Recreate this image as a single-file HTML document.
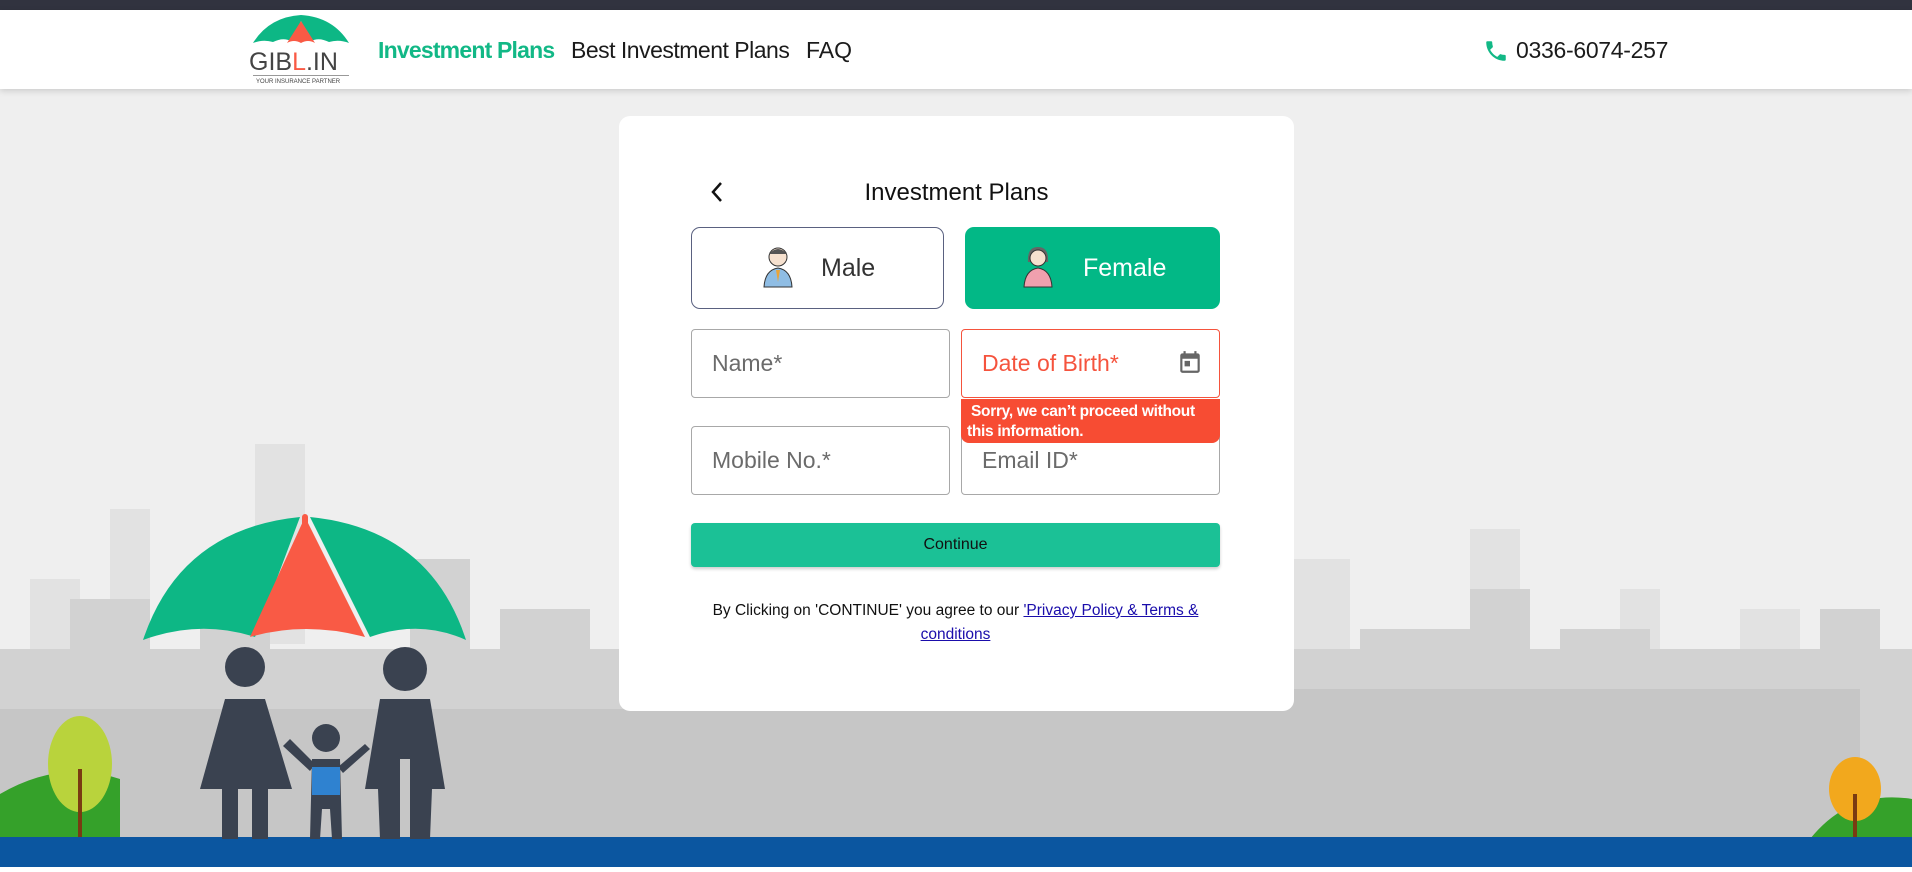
<!DOCTYPE html>
<html><head><meta charset="utf-8"><style>
*{box-sizing:border-box;margin:0;padding:0}
body{width:1912px;height:872px;overflow:hidden;background:#efefef;font-family:"Liberation Sans",Arial,sans-serif;position:relative}
.topbar{position:absolute;left:0;top:0;width:1912px;height:10px;background:#31333f}
.header{position:absolute;left:0;top:10px;width:1912px;height:79px;background:#fff;box-shadow:0 2px 6px rgba(0,0,0,.15);z-index:3}
.nav{position:absolute;top:27px;font-size:23px;color:#1b1b1b;white-space:nowrap}
.abs{position:absolute}
.card{position:absolute;left:619px;top:116px;width:675px;height:595px;background:#fff;border-radius:11px;z-index:2}
.inp{position:absolute;border:1px solid #a8a8a8;border-radius:4px;font-size:23px;color:#6b6b6b;padding:20px 0 0 20px}
</style></head><body>
<div class="topbar"></div>
<svg class="abs" style="left:0;top:89px;z-index:0" width="1912" height="783">
<g fill="#e2e2e2">
<rect x="255" y="355" width="50" height="200"/><rect x="110" y="420" width="40" height="250"/><rect x="1470" y="440" width="50" height="230"/><rect x="1290" y="470" width="60" height="200"/><rect x="1620" y="500" width="40" height="200"/><rect x="1740" y="520" width="60" height="200"/><rect x="30" y="490" width="50" height="200"/><rect x="1170" y="470" width="50" height="200"/><rect x="1780" y="560" width="60" height="200"/>
</g>
<g fill="#d2d2d2">
<rect x="0" y="560" width="1912" height="190"/>
<rect x="70" y="510" width="80" height="150"/><rect x="200" y="480" width="70" height="180"/><rect x="410" y="470" width="60" height="190"/><rect x="500" y="520" width="90" height="140"/><rect x="1080" y="540" width="80" height="120"/><rect x="1240" y="560" width="70" height="110"/><rect x="1360" y="540" width="110" height="130"/><rect x="1470" y="500" width="60" height="170"/><rect x="1560" y="540" width="90" height="130"/><rect x="1700" y="560" width="80" height="110"/><rect x="1820" y="520" width="60" height="150"/>
</g>
<g fill="#c6c6c6"><rect x="660" y="600" width="1200" height="150"/><rect x="0" y="620" width="660" height="130"/></g>
<path d="M0 705 Q60 670 120 690 L120 750 L0 750Z" fill="#35a12a"/>
<path d="M1810 750 Q1850 700 1912 710 L1912 750Z" fill="#35a12a"/>
<ellipse cx="80" cy="675" rx="32" ry="48" fill="#b9d33c"/><rect x="78" y="680" width="4" height="70" fill="#7a3b12"/>
<ellipse cx="1855" cy="700" rx="26" ry="32" fill="#f2a81d"/><rect x="1853" y="705" width="4" height="45" fill="#7a3b12"/>
<rect x="0" y="748" width="1912" height="35" fill="#0b56a0"/>
<rect x="0" y="778" width="1912" height="5" fill="#fff"/>
<path d="M143 551 Q180 440 300 428 L255 548 Q200 530 143 551Z" fill="#0db785"/>
<path d="M305 428 L250 548 Q305 532 365 548Z" fill="#f95a45"/>
<path d="M310 428 Q430 440 466 551 Q420 530 370 548Z" fill="#0db785"/>
<rect x="302" y="425" width="6" height="14" rx="3" fill="#f95a45"/>
<g fill="#3a4250">
<circle cx="245" cy="578" r="20"/><path d="M225 610 L265 610 L292 700 L268 700 L268 750 L252 750 L252 700 L238 700 L238 750 L222 750 L222 700 L200 700Z"/>
<circle cx="405" cy="580" r="22"/><path d="M380 610 L430 610 L445 700 L432 700 L430 750 L410 750 L410 670 L400 670 L400 750 L380 750 L378 700 L365 700Z"/>
<circle cx="326" cy="649" r="14"/><path d="M312 670 L340 670 L342 750 L332 750 L330 720 L322 720 L320 750 L310 750Z"/>
<path d="M290 650 L315 675 L310 682 L283 657Z"/><path d="M365 655 L338 678 L343 684 L370 660Z"/>
</g>
<rect x="312" y="678" width="28" height="28" fill="#2f82d0"/>
</svg>
<div class="header">
<svg class="abs" style="left:249px;top:3px" width="104" height="76">
<path d="M4 30 Q20 4 52 2 Q84 4 100 30 Q90 26 80 29 Q70 24 62 28 L52 8 L42 28 Q34 24 24 29 Q14 26 4 30Z" fill="#0db785"/>
<path d="M52 8 L38 30 Q45 26 52 30 Q59 26 66 30Z" fill="#f95a45"/>
<text x="0" y="57" font-family="Liberation Sans" font-size="25" fill="#444">GIB<tspan fill="#f95a45">L</tspan>.IN</text>
<rect x="4" y="62" width="96" height="1" fill="#999"/>
<text x="7" y="70" font-family="Liberation Sans" font-size="6" fill="#444">YOUR INSURANCE PARTNER</text>
</svg>
<div class="nav" style="left:378px;color:#12b886;font-weight:bold;letter-spacing:-0.8px">Investment Plans</div>
<div class="nav" style="left:571px;letter-spacing:-0.5px">Best Investment Plans</div>
<div class="nav" style="left:806px">FAQ</div>
<svg class="abs" style="left:1483px;top:28px" width="26" height="26" viewBox="0 0 24 24"><path fill="#12b886" d="M6.6 10.8c1.4 2.8 3.8 5.1 6.6 6.6l2.2-2.2c.3-.3.7-.4 1-.2 1.1.4 2.3.6 3.6.6.6 0 1 .4 1 1V20c0 .6-.4 1-1 1C10.6 21 3 13.4 3 4c0-.6.4-1 1-1h3.5c.6 0 1 .4 1 1 0 1.3.2 2.5.6 3.6.1.3 0 .7-.2 1z"/></svg>
<div class="nav" style="left:1516px;top:27px;font-size:23px;letter-spacing:-0.3px">0336-6074-257</div>
</div>
<div class="card">
<svg class="abs" style="left:88px;top:64px" width="20" height="24"><path d="M14 3 L6 12 L14 21" stroke="#111" stroke-width="2.5" fill="none"/></svg>
<div class="abs" style="left:0;width:675px;text-align:center;top:63px;font-size:24px;color:#111">Investment Plans</div>
<div class="abs" style="left:72px;top:111px;width:253px;height:82px;border:1px solid #5a6180;border-radius:9px"></div>
<svg class="abs" style="left:143px;top:130px" width="32" height="42"><circle cx="16" cy="11" r="9" fill="#f6e1cf" stroke="#333"/><path d="M7 8 Q16 -2 25 8" fill="#555"/><path d="M2 41 Q3 24 16 22 Q29 24 30 41Z" fill="#8fbde4" stroke="#333"/><path d="M14 24 L18 24 L16 36Z" fill="#e9a43a"/></svg>
<div class="abs" style="left:202px;top:138px;font-size:25px;color:#333">Male</div>
<div class="abs" style="left:346px;top:111px;width:255px;height:82px;background:#02b886;border-radius:9px"></div>
<svg class="abs" style="left:404px;top:130px" width="30" height="42"><path d="M5 16 Q4 1 15 1 Q26 1 25 16Z" fill="#666"/><circle cx="15" cy="12" r="8" fill="#f6e1cf" stroke="#333"/><path d="M1 41 Q2 24 15 22 Q28 24 29 41Z" fill="#f0a0ae" stroke="#333"/></svg>
<div class="abs" style="left:464px;top:138px;font-size:25px;color:#fff">Female</div>
<div class="inp" style="left:72px;top:213px;width:259px;height:69px">Name*</div>
<div class="inp" style="left:342px;top:213px;width:259px;height:69px;border-color:#f5533d;color:#f5533d">Date of Birth*</div>
<svg class="abs" style="left:558px;top:232px" width="26" height="28" viewBox="0 0 24 24"><path fill="#666" d="M19 4h-1V2h-2v2H8V2H6v2H5C3.9 4 3 4.9 3 6v14c0 1.1.9 2 2 2h14c1.1 0 2-.9 2-2V6c0-1.1-.9-2-2-2zm0 16H5V9h14v11zM7 11h5v5H7z"/></svg>
<div class="inp" style="left:72px;top:310px;width:259px;height:69px">Mobile No.*</div>
<div class="inp" style="left:342px;top:310px;width:259px;height:69px;padding-top:20px">Email ID*</div>
<div class="abs" style="left:342px;top:283px;width:259px;height:44px;background:#f74c33;border-radius:0 0 8px 8px;color:#fff;font-size:15.5px;font-weight:bold;line-height:20px;padding:3px 6px 0 6px;letter-spacing:-0.3px">&nbsp;Sorry, we can’t proceed without this information.</div>
<div class="abs" style="left:72px;top:407px;width:529px;height:44px;background:#1bc196;border-radius:4px;box-shadow:0 2px 3px rgba(0,0,0,.2);text-align:center;line-height:44px;font-size:16px;color:#111">Continue</div>
<div class="abs" style="left:62px;top:483px;width:549px;text-align:center;font-size:15.5px;line-height:24px;color:#111">By Clicking on 'CONTINUE' you agree to our <span style="color:#1a0dab;text-decoration:underline">'Privacy Policy &amp; Terms &amp; conditions</span></div>
</div>
</body></html>
